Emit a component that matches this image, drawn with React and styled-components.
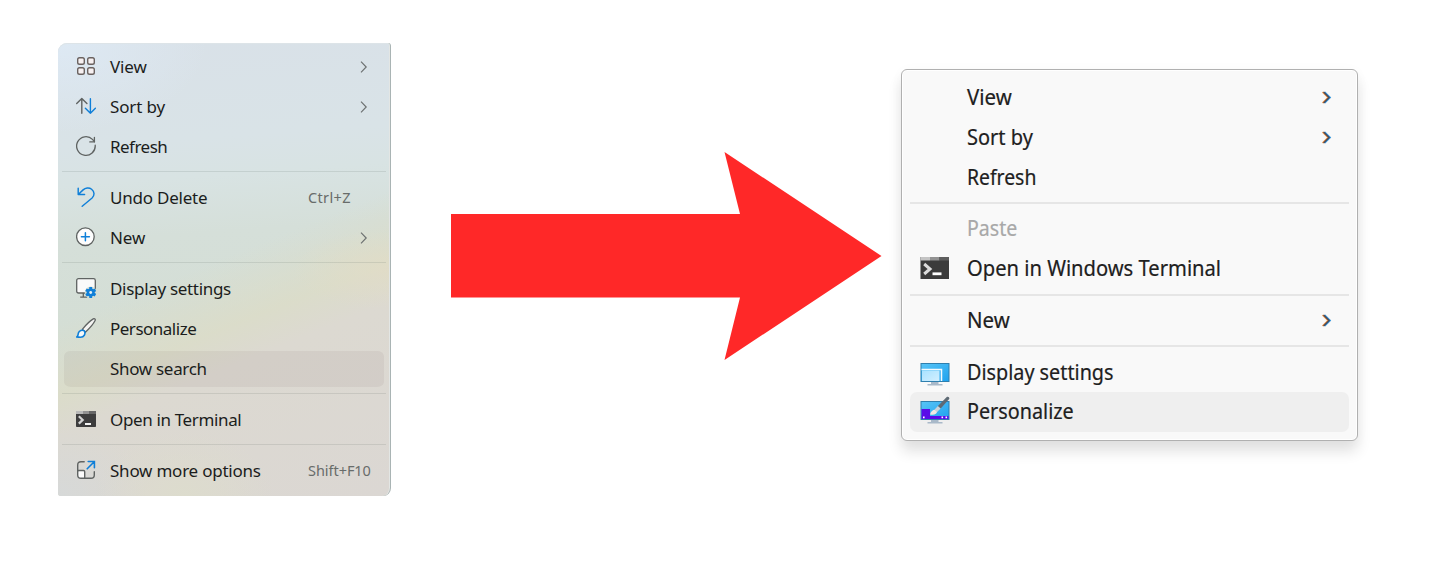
import React from "react";
import styled, { createGlobalStyle } from "styled-components";

const GlobalStyle = createGlobalStyle`
  body { margin: 0; background: #fff; overflow: hidden; }
`;

const Stage = styled.main`
  display: flex;
  align-items: flex-start;
  width: 1451px;
  height: 562px;
  box-sizing: border-box;
  padding-left: 58px;
  background: #fff;
  font-family: "Noto Sans", "Open Sans", sans-serif;
`;

/* ---------- translucent menu ---------- */

const AcrylicMenu = styled.nav`
  flex: none;
  width: 333px;
  height: 453px;
  margin-top: 42.5px;
  box-sizing: border-box;
  padding: 4.5px 0 4px;
  border-radius: 9px 3px 8px 3px;
  border-right: 1px solid #a9b4b4;
  box-shadow: inset -1px 0 0 #e3e6e4, inset 0 1px 0 #dde4e8;
  background:
    radial-gradient(ellipse 150px 90px at 0% 0%, rgba(222, 234, 245, 0.9), rgba(222, 234, 245, 0) 100%),
    radial-gradient(ellipse 90px 40px at 98% 50%, rgba(226, 220, 198, 0.7), rgba(226, 220, 198, 0) 100%),
    radial-gradient(ellipse 90px 65px at 38% 100%, rgba(221, 221, 204, 0.8), rgba(221, 221, 204, 0) 100%),
    radial-gradient(ellipse 90px 70px at 0% 100%, rgba(214, 217, 217, 0.9), rgba(214, 217, 217, 0) 100%),
    linear-gradient(158deg, rgba(213, 224, 216, 0) 48%, rgba(220, 220, 200, 0.85) 60%, #dcd9d1 67%, #dbd7d3 100%),
    linear-gradient(176deg, #d9e1e8 0%, #d9e3e7 22%, #d8e3e3 30%, #d5dfd9 42%, #d4ded5 60%, #d5ddd2 100%);
`;

const AcrylicRow = styled.div`
  display: flex;
  align-items: center;
  height: 36px;
  margin: 0 6px;
  padding: 0 12px;
  border-radius: 7px;
  border-block: 2px solid transparent;
  background: ${(p) => (p.$active ? "rgba(120, 105, 105, 0.09)" : "transparent")};
  background-clip: padding-box;
`;

const AcrylicIcon = styled.span`
  flex: none;
  width: 20px;
  height: 20px;
  margin: -2px 14px 0 0;
  svg { display: block; }
`;

const AcrylicLabel = styled.span`
  flex: 1;
  white-space: nowrap;
  font-size: 17px;
  line-height: 36px;
  letter-spacing: ${(p) => p.$track ?? -0.4}px;
  color: #1b1d1c;
`;

const Shortcut = styled.span`
  width: 64px;
  margin-top: -2px;
  white-space: nowrap;
  font-size: 14.5px;
  line-height: 36px;
  letter-spacing: ${(p) => p.$track ?? 0}px;
  color: #686c6a;
`;

const AcrylicRule = styled.div`
  height: 1px;
  margin: 4px 4px 6px;
  background: rgba(90, 100, 95, 0.15);
`;

const SmallChevron = styled.svg`
  flex: none;
  margin-right: 4px;
`;

/* ---------- opaque menu ---------- */

const SolidMenu = styled.nav`
  flex: none;
  width: 457px;
  height: 372px;
  margin: 69px 0 0 18.5px;
  box-sizing: border-box;
  padding: 8.400px 8px;
  border: 1px solid #b0b0b0;
  border-width: 1.5px 1px;
  border-radius: 6px;
  background: #f9f9f9;
  box-shadow: inset 0 0 0 1px #fff, 0 11px 14px rgba(0, 0, 0, 0.11), 0 2px 14px rgba(0, 0, 0, 0.03);
`;

const SolidRow = styled.div`
  display: flex;
  align-items: center;
  height: 39.6px;
  box-sizing: border-box;
  padding: 0 16px 0 10px;
  border-radius: 7px;
  background: ${(p) => (p.$active ? "#efefef" : "transparent")};
`;

const SolidIcon = styled.span`
  flex: none;
  width: 30px;
  height: 30px;
  margin: -1px 17px 0 0;
  svg { display: block; }
`;

const SolidLabel = styled.span`
  flex: 1;
  margin-top: -1.500px;
  white-space: nowrap;
  font-size: 21.5px;
  line-height: 38px;
  transform: scaleX(${(p) => p.$stretch ?? 0.92});
  transform-origin: 0 50%;
  color: ${(p) => (p.$disabled ? "#a8a8a8" : "#202020")};
  -webkit-text-stroke: 0.2px currentColor;
`;

const SolidRule = styled.div`
  height: 2px;
  margin: 5px 0 5.2px;
  background: #e6e6e6;
`;

const Arrow = styled.svg`
  flex: none;
  margin: 151px 0 0 60px;
`;

const G = "#5f6362";
const B = "#0f7fd8";

const icons = {
  grid: (
    <g fill="#f6f0f1" stroke="#6a6260" strokeWidth="1.4">
      <rect x="1.7" y="1.7" width="6.6" height="6.6" rx="1.8" />
      <rect x="11.7" y="1.7" width="6.6" height="6.6" rx="1.8" />
      <rect x="1.7" y="11.7" width="6.6" height="6.6" rx="1.8" />
      <rect x="11.7" y="11.7" width="6.6" height="6.6" rx="1.8" />
    </g>
  ),
  sort: (
    <g fill="none" strokeWidth="1.4" strokeLinecap="round" strokeLinejoin="round">
      <path d="M5.8 17.2V2.6M.7 7.4l5.1-5 5.1 5" stroke={G} />
      <path d="M14.4 2.800v14.400M9.400 12.200l5 5 5-5" stroke={B} />
    </g>
  ),
  refresh: (
    <g fill="none" stroke={G} strokeWidth="1.3" strokeLinecap="round" strokeLinejoin="round">
      <path d="M19.2 9.2a9.3 9.3 0 1 1-2.700-5.800l1.900 2.300" />
      <path d="M18.4 1.3v4.600h-4.600" />
    </g>
  ),
  undo: (
    <path
      d="M2.2 1.2v6.3h6.4M2.5 7.2l4.6-4.3C9.3.8 13 .2 15.6 2.2c3 2.4 3.2 6.1.5 8.8L6.2 19.2"
      fill="none" stroke={B} strokeWidth="1.45" strokeLinecap="round" strokeLinejoin="round"
    />
  ),
  plus: (
    <g fill="none" strokeWidth="1.3" strokeLinecap="round">
      <circle cx="9.4" cy="9.7" r="8.8" fill="#fdfdfd" stroke={G} />
      <path d="M9.4 5.700v8M5.400 9.700h8" stroke={B} strokeWidth="1.5" />
    </g>
  ),
  display: (
    <g>
      <rect x=".7" y=".7" width="18.6" height="14.3" rx="1.8" fill="#fafafa" stroke={G} strokeWidth="1.3" />
      <path d="M7.3 15v4M4.2 19.2h7" stroke={G} strokeWidth="1.3" fill="none" />
      <circle cx="14.7" cy="14.5" r="5.9" fill="#d2ddd3" />
      <g fill={B}>
        <circle cx="14.7" cy="14.5" r="4" />
        <g stroke={B} strokeWidth="2.9">
          <path d="M14.7 9.1v10.800M10 11.800l9.400 5.400M10 17.200l9.400-5.400" />
        </g>
      </g>
      <circle cx="14.7" cy="14.5" r="1.4" fill="#e8f1f5" />
    </g>
  ),
  brush: (
    <g strokeLinejoin="round" strokeWidth="1.3">
      <path d="M6.3 11.3C10 6.8 13.8 3 17.3.9c1.2-.7 2.4.4 1.8 1.7-1.7 3.6-5.5 7.8-9.7 11.7z" fill="#f4f4f2" stroke={G} />
      <path d="M8.6 13.2c1 2.8-.4 6-4.1 6-1.3 0-2.6-.1-3.8-.3 1.6-.8 1.2-2.1 1.7-3.8.6-2.4 3.8-3.8 6.2-1.9z" fill="#f5f8fa" stroke={B} strokeWidth="1.6" />
    </g>
  ),
  terminal: (
    <g>
      <rect y="2" width="20" height="16" rx=".8" fill="#3d3d3d" />
      <path d="M0 2h7v3H0z" fill="#b9b9b9" />
      <path d="M7 2h6.5v3H7z" fill="#929292" />
      <path d="M13.5 2H20v3h-6.5z" fill="#666" />
      <path d="M2.8 7.2l3.9 3.7-3.900 3.700" fill="none" stroke="#d4d4d4" strokeWidth="2.200" />
      <path d="M9 15h6" stroke="#fff" strokeWidth="1.9" />
    </g>
  ),
  more: (
    <g fill="none" strokeWidth="1.4" strokeLinecap="round">
      <path d="M1.7 10.5h5.8q1.200 0 1.200 1.200v6.600H5q-3.300 0-3.300-3.300z" fill="#fbfbfb" stroke={G} />
      <path d="M1.7 11V5Q1.700 1.700 5 1.700h3.200M8.700 18.300H15q3.300 0 3.300-3.300v-3.300" stroke={G} />
      <path d="M11.2 8.8l7-7M12.200 1.500h6.200v6.200" stroke={B} strokeWidth="1.6" />
    </g>
  ),
};

const Pic = ({ name }) => (
  <svg width="20" height="20" viewBox="0 0 20 20">{icons[name]}</svg>
);

const WideTerminal = () => (
  <svg width="30" height="30" viewBox="0 0 30 30">
    <rect x=".5" y="4" width="28.5" height="22" fill="#3b3b3b" />
    <path d="M.5 4H10v3.500H.5z" fill="#c4c4c4" />
    <path d="M10 4h9.500v3.500H10z" fill="#929292" />
    <path d="M19.5 4H29v3.500h-9.500z" fill="#5e5e5e" />
    <path d="M4.2 11l5.800 5-5.800 5" fill="none" stroke="#dcdcdc" strokeWidth="3" />
    <path d="M12.5 20.800h9" stroke="#fff" strokeWidth="2.800" />
  </svg>
);

const Screen = ({ y }) => (
  <g>
    <path d={`M11 ${y + 19}h7.500v2h4v1.500H7.500v-1.500H11z`} fill="#a9b9c9" />
    <rect x="1" y={y + 0.5} width="28" height="18" fill="url(#sky)" stroke="#2f7fae" />
  </g>
);

const Sky = () => (
  <defs>
    <linearGradient id="sky" x1="0" y1="0" x2="1" y2="1">
      <stop offset="0" stopColor="#58c4f6" />
      <stop offset="1" stopColor="#1ea2ef" />
    </linearGradient>
    <linearGradient id="glass" x1="0" y1="0" x2="1" y2="1">
      <stop offset="0" stopColor="#a9e2ff" />
      <stop offset="1" stopColor="#d2efff" />
    </linearGradient>
  </defs>
);

const WideDisplay = () => (
  <svg width="30" height="30" viewBox="0 0 30 30">
    <Sky />
    <Screen y={6} />
    <path d="M1.5 12.500H21.500V24" fill="none" stroke="#f4fbff" strokeWidth="1.5" />
    <path d="M2 13.500h17.500V24H2z" fill="url(#glass)" />
  </svg>
);

const WideBrush = () => (
  <svg width="30" height="30" viewBox="0 0 30 30">
    <Screen y={5} />
    <path d="M1.5 13H10v7h18.500v3h-27z" fill="#5a0be8" />
    <path d="M3 20.500h1.600v1.700H3zM21.500 20.500h1.600v1.700h-1.600zM25.500 20.500h1.600v1.700h-1.600z" fill="#fff" />
    <path d="M10 18.500c1-3.600 3.300-5 5-4.700l2 1.800c.2 2.200-2.600 3.800-7 2.900z" fill="#f2e9e2" />
    <path d="M14.600 13.600l3.600-3.800 2.600 2.400-3.600 3.800z" fill="#cbd2d8" />
    <path d="M17.900 10L27 .8q2.500-.5 2.400 2L20.700 12.500z" fill="#5e6a74" />
  </svg>
);

const ThinChevron = () => (
  <SmallChevron width="8" height="12" viewBox="0 0 8 12">
    <path d="M1 .7l5.200 5.300L1 11.300" fill="none" stroke="#6c7070" strokeWidth="1.15" />
  </SmallChevron>
);

const BoldChevron = () => (
  <svg width="12" height="14" viewBox="0 0 12 14">
    <path d="M1.600 1l5.500 5.500L1.600 12" fill="none" stroke="#ec8a35" strokeWidth="1.6" />
    <path d="M3.600 1l5.500 5.500L3.600 12" fill="none" stroke="#2f93dc" strokeWidth="1.6" />
    <path d="M2.600 1l5.500 5.500L2.600 12" fill="none" stroke="#46485a" strokeWidth="1.3" />
  </svg>
);

const acrylicGroups = [
  [
    { icon: "grid", text: "View", sub: true, track: -0.15 },
    { icon: "sort", text: "Sort by", sub: true, track: -0.13 },
    { icon: "refresh", text: "Refresh", track: -0.52 },
  ],
  [
    { icon: "undo", text: "Undo Delete", keys: "Ctrl+Z", keyTrack: 0.35, track: -0.22 },
    { icon: "plus", text: "New", sub: true, track: -0.1 },
  ],
  [
    { icon: "display", text: "Display settings", track: -0.31 },
    { icon: "brush", text: "Personalize", track: -0.5 },
    { text: "Show search", active: true, track: -0.31 },
  ],
  [{ icon: "terminal", text: "Open in Terminal", track: -0.36 }],
  [{ icon: "more", text: "Show more options", keys: "Shift+F10", keyTrack: -0.05, track: -0.23 }],
];

const solidGroups = [
  [
    { text: "View", sub: true, stretch: 0.95 },
    { text: "Sort by", sub: true, stretch: 0.93 },
    { text: "Refresh", stretch: 0.9 },
  ],
  [
    { text: "Paste", disabled: true, stretch: 0.91 },
    { icon: WideTerminal, text: "Open in Windows Terminal", stretch: 0.938 },
  ],
  [{ text: "New", sub: true, stretch: 0.95 }],
  [{ icon: WideDisplay, text: "Display settings" }, { icon: WideBrush, text: "Personalize", active: true }],
];

export default function App() {
  return (
    <>
      <GlobalStyle />
      <Stage>
        <AcrylicMenu>
          {acrylicGroups.map((group, i) => (
            <React.Fragment key={i}>
              {i > 0 && <AcrylicRule />}
              {group.map((item) => (
                <AcrylicRow key={item.text} $active={item.active}>
                  <AcrylicIcon>{item.icon && <Pic name={item.icon} />}</AcrylicIcon>
                  <AcrylicLabel $track={item.track}>{item.text}</AcrylicLabel>
                  {item.keys && <Shortcut $track={item.keyTrack}>{item.keys}</Shortcut>}
                  {item.sub && <ThinChevron />}
                </AcrylicRow>
              ))}
            </React.Fragment>
          ))}
        </AcrylicMenu>

        <Arrow width="431" height="210" viewBox="0 0 431 210">
          <path d="M0 63h289L273.500 1 430.500 105 273.500 209 289 146.500H0z" fill="#ff2828" />
        </Arrow>

        <SolidMenu>
          {solidGroups.map((group, i) => (
            <React.Fragment key={i}>
              {i > 0 && <SolidRule />}
              {group.map((item) => (
                <SolidRow key={item.text} $active={item.active}>
                  <SolidIcon>{item.icon && <item.icon />}</SolidIcon>
                  <SolidLabel $disabled={item.disabled} $stretch={item.stretch}>{item.text}</SolidLabel>
                  {item.sub && <BoldChevron />}
                </SolidRow>
              ))}
            </React.Fragment>
          ))}
        </SolidMenu>
      </Stage>
    </>
  );
}
